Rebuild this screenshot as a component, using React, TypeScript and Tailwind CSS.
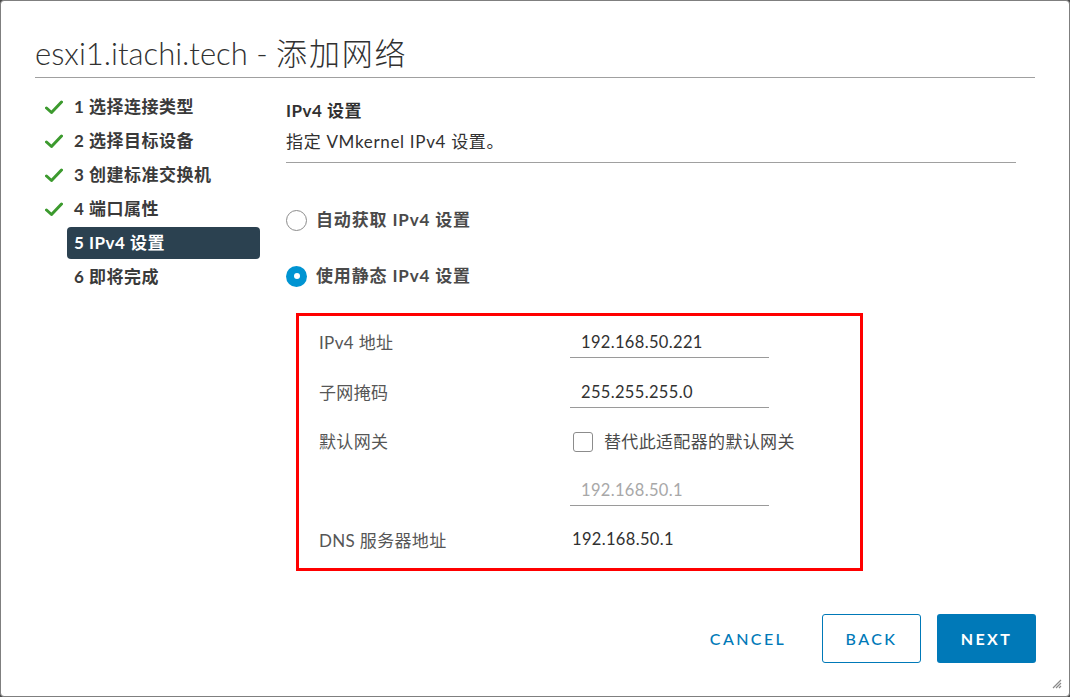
import React from "react";

const FONT = { fontFamily: "Lato, 'Noto Sans CJK SC', sans-serif" };

const steps = [
  { n: 1, label: "选择连接类型", done: true },
  { n: 2, label: "选择目标设备", done: true },
  { n: 3, label: "创建标准交换机", done: true },
  { n: 4, label: "端口属性", done: true },
  { n: 5, label: "IPv4 设置", active: true },
  { n: 6, label: "即将完成" },
];

const Check = () => (
  <svg width="18" height="15" viewBox="0 0 18 15">
    <path d="M1.5 8 L6.5 12.5 L16.5 2" fill="none" stroke="#3c9a2e" strokeWidth="3" strokeLinecap="round" strokeLinejoin="round" />
  </svg>
);

const Radio = ({ on }: { on?: boolean }) =>
  on ? (
    <span className="flex h-[21px] w-[21px] items-center justify-center rounded-full bg-[#0094d2]">
      <span className="h-[6px] w-[6px] rounded-full bg-white" />
    </span>
  ) : (
    <span className="block h-[21px] w-[21px] rounded-full border border-[#8c8c8c] bg-white" />
  );

const Field = ({ value, muted }: { value: string; muted?: boolean }) => (
  <div className={`flex h-[31px] w-[199px] items-center border-b border-[#9a9a9a] pl-[11px] text-[16.5px] ${muted ? "text-[#a8a8a8]" : "text-[#313131]"}`}>
    {value}
  </div>
);

export default function App() {
  return (
    <div className="h-[697px] w-[1070px] bg-[#4a4a4a]" style={FONT}>
      <div className="relative flex h-full w-full flex-col rounded-[4px] border border-[#7f7f7f] bg-white">
        <div className="mx-[34px] mt-[34px] border-b border-[#a0a0a0] pb-[6px]">
          <h1 className="h-[36px] text-[31px] font-light leading-[36px] text-[#313131]">
            esxi1.itachi.tech - <span className="tracking-[0.06em]">添加网络</span>
          </h1>
        </div>

        <div className="flex flex-1 pl-[34px]">
          <nav className="mt-[13px] w-[225px]">
            {steps.map((s) => (
              <div key={s.n} className="mb-[2px] flex h-[32px] items-center">
                <span className="flex w-[32px] justify-center pl-[5px]">{s.done && <Check />}</span>
                <span
                  className={`flex h-[32px] flex-1 items-center rounded-[4px] pl-[7px] text-[17px] font-bold tracking-[0.03em] ${
                    s.active ? "bg-[#2b4150] text-white" : "text-[#3a3a3a]"
                  }`}
                >
                  {s.n} {s.label}
                </span>
              </div>
            ))}
          </nav>

          <main className="ml-[26px] w-[730px]">
            <div className="border-b border-[#a0a0a0] pb-[10px] pt-[23px]">
              <div className="text-[17px] font-bold leading-[20px] tracking-[0.03em] text-[#313131]">IPv4 设置</div>
              <div className="mt-[11px] text-[17px] leading-[20px] tracking-[0.04em] text-[#313131]">指定 VMkernel IPv4 设置。</div>
            </div>

            <div className="mt-[41px] flex h-[32px] items-center gap-[9px]">
              <Radio />
              <span className="text-[17px] font-bold tracking-[0.05em] text-[#4a4a4a]">自动获取 IPv4 设置</span>
            </div>
            <div className="mt-[24px] flex h-[32px] items-center gap-[9px]">
              <Radio on />
              <span className="text-[17px] font-bold tracking-[0.05em] text-[#4a4a4a]">使用静态 IPv4 设置</span>
            </div>

            <div className="ml-[10px] mt-[21px] h-[258px] w-[567px] border-[3px] border-[#ff0000] pl-[20px] pt-[11px] text-[17px] tracking-[0.02em] text-[#565656]">
              <div className="flex items-center">
                <span className="w-[251px]">IPv4 地址</span>
                <Field value="192.168.50.221" />
              </div>
              <div className="mt-[19px] flex items-center">
                <span className="w-[251px]">子网掩码</span>
                <Field value="255.255.255.0" />
              </div>
              <div className="mt-[18px] flex h-[31px] items-center">
                <span className="w-[254px]">默认网关</span>
                <span className="h-[20px] w-[20px] rounded-[3px] border border-[#8c8c8c]" />
                <span className="ml-[11px] text-[#4a4a4a]">替代此适配器的默认网关</span>
              </div>
              <div className="mt-[18px] flex items-center">
                <span className="w-[251px]" />
                <Field value="192.168.50.1" muted />
              </div>
              <div className="mt-[17px] flex h-[32px] items-center">
                <span className="w-[253px] pt-[4px]">DNS 服务器地址</span>
                <span className="text-[16.5px] text-[#313131]">192.168.50.1</span>
              </div>
            </div>
          </main>
        </div>

        <div className="mb-[33px] mr-[33px] flex justify-end text-[16px] tracking-[0.15em]">
          <button className="mr-[24px] h-[49px] w-[100px] font-medium text-[#0079b8]">CANCEL</button>
          <button className="mr-[16px] h-[49px] w-[99px] rounded-[3px] border border-[#0079b8] font-medium text-[#0079b8]">
            BACK
          </button>
          <button className="h-[49px] w-[99px] rounded-[3px] bg-[#0079b8] font-bold text-white">NEXT</button>
        </div>

        <svg className="absolute bottom-[7px] right-[7px]" width="11" height="11" viewBox="0 0 11 11">
          <path d="M10 2 L2 10 M10 5 L5 10 M10 8 L8 10" stroke="#8a8a8a" strokeWidth="1.2" />
        </svg>
      </div>
    </div>
  );
}
